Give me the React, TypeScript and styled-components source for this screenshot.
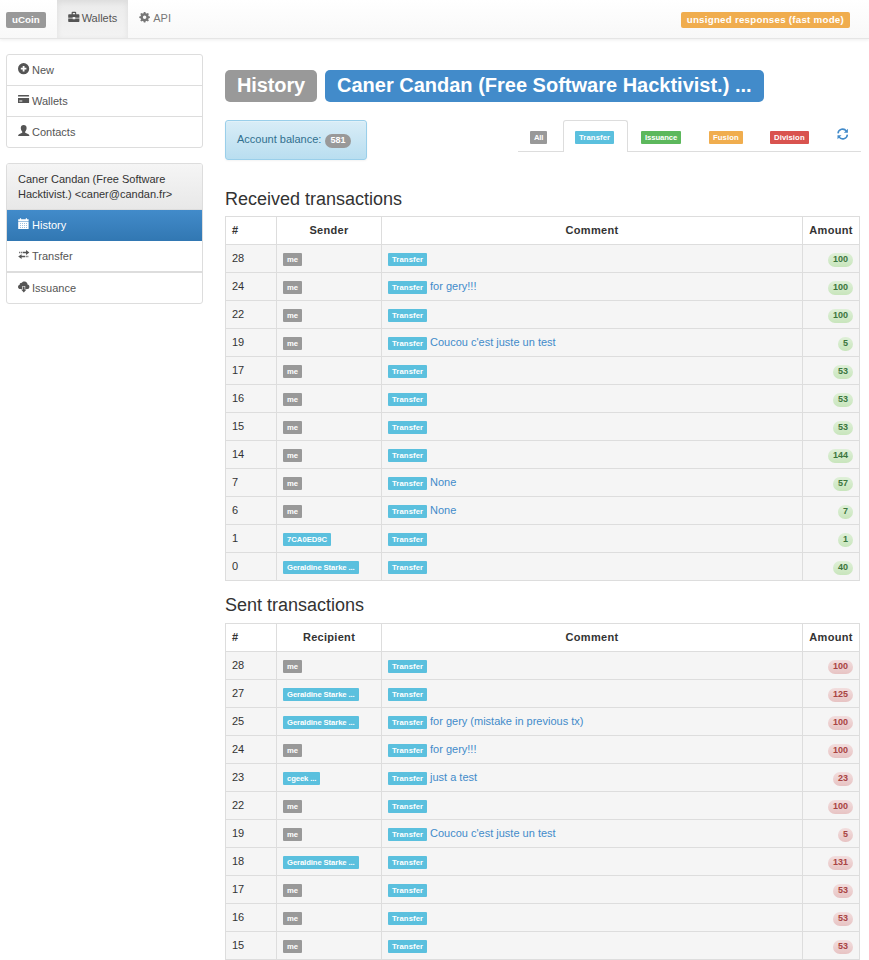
import React from 'react';
import styled, { createGlobalStyle, css } from 'styled-components';

const GlobalStyle = createGlobalStyle`
  *, *::before, *::after { box-sizing: border-box; }
  html, body { margin: 0; padding: 0; background: #fff; }
  body {
    font-family: "Liberation Sans", Arial, sans-serif;
    font-size: 11px;
    line-height: 15px;
    color: #333;
    height: 960px;
    overflow: hidden;
  }
  a { color: #428bca; text-decoration: none; }
`;

const tones = {
  gray: '#999999',
  primary: '#428bca',
  info: '#5bc0de',
  success: '#5cb85c',
  warning: '#f0ad4e',
  danger: '#d9534f',
};
type Tone = keyof typeof tones;

const Navbar = styled.nav`
  display: flex;
  align-items: flex-start;
  height: 39px;
  padding-left: 6px;
  padding-right: 19px;
  border-bottom: 1px solid #e5e5e5;
  background: linear-gradient(#ffffff, #f8f8f8);
  box-shadow: 0 1px 3px rgba(0, 0, 0, 0.075);
`;

const NavLabel = styled.span<{ $tone: Tone; $spacing?: number }>`
  height: 16px;
  margin-top: 12px;
  padding: 0 6px;
  border-radius: 2px;
  background: ${(p) => tones[p.$tone]};
  color: #fff;
  font-size: 9.75px;
  font-weight: bold;
  letter-spacing: ${(p) => p.$spacing ?? 0}px;
  line-height: 15px;
  white-space: nowrap;
`;

const NavLinks = styled.div`
  display: flex;
  flex: 1;
  margin-left: 11px;
`;

const NavLink = styled.a<{ $active?: boolean }>`
  display: flex;
  align-items: flex-start;
  gap: 2px;
  height: 38px;
  padding: 11px 11px 0;
  && { color: ${(p) => (p.$active ? '#555' : '#777')}; }
  ${(p) =>
    p.$active &&
    css`
      background: linear-gradient(#ebebeb, #f3f3f3);
      box-shadow: inset 0 2px 6px rgba(0, 0, 0, 0.075);
    `}
`;

const Page = styled.div`
  display: grid;
  grid-template-columns: 197px 635px;
  column-gap: 22px;
  padding-left: 6px;
`;

const Sidebar = styled.aside`
  display: flex;
  flex-direction: column;
  gap: 15px;
  padding-top: 15px;
`;

const ListGroup = styled.div`
  border: 1px solid #ddd;
  border-radius: 3px;
  overflow: hidden;
`;

const ListHeading = styled.div`
  height: 46px;
  padding: 8px 11px;
  border-bottom: 1px solid #ddd;
  background: linear-gradient(#f5f5f5, #e8e8e8);
  white-space: nowrap;
`;

const ListItem = styled.a<{ $active?: boolean; $thick?: boolean }>`
  display: flex;
  gap: 2px;
  height: ${(p) => (p.$thick ? 32 : 31)}px;
  padding: 8px 11px 0;
  border-bottom: ${(p) => (p.$thick ? 2 : 1)}px solid #ddd;
  && { color: #555; }
  &:last-child { height: 30px; border-bottom: 0; }
  ${(p) =>
    p.$active &&
    css`
      && { color: #fff; }
      background: linear-gradient(#428bca, #3278b3);
      border-bottom-color: #3278b3;
    `}
`;

const Glyph = styled.svg`
  display: block;
  flex: none;
  width: 12px;
  height: 12px;
  fill: currentColor;
`;

const Content = styled.main`
  padding-top: 31px;
`;

const TitleRow = styled.h1`
  display: flex;
  gap: 8px;
  margin: 0;
`;

const TitleLabel = styled.span<{ $tone: Tone; $width: number; $spacing?: number }>`
  width: ${(p) => p.$width}px;
  height: 32px;
  padding: 0 12px;
  border-radius: 5px;
  background: ${(p) => tones[p.$tone]};
  color: #fff;
  font-size: 20px;
  font-weight: bold;
  letter-spacing: ${(p) => p.$spacing ?? 0}px;
  line-height: 30px;
  white-space: nowrap;
`;

const Summary = styled.div`
  display: flex;
  justify-content: space-between;
  align-items: flex-start;
  height: 40px;
  margin: 18px -1px 0 0;
`;

const Balance = styled.div`
  display: flex;
  gap: 4px;
  width: 142px;
  height: 40px;
  padding: 11px;
  border: 1px solid #9acfea;
  border-radius: 3px;
  background: linear-gradient(#d9edf7, #b9def0);
  box-shadow: inset 0 1px 0 rgba(255, 255, 255, 0.25), 0 1px 2px rgba(0, 0, 0, 0.05);
  color: #31708f;
  white-space: nowrap;
`;

const Badge = styled.span<{ $kind?: 'in' | 'out' }>`
  display: inline-block;
  height: 14px;
  padding: 0 5px;
  border-radius: 7px;
  font-size: 9px;
  font-weight: bold;
  line-height: 13px;
  vertical-align: top;
  background: #999;
  color: #fff;
  ${(p) => p.$kind === 'in' && css`background: linear-gradient(#dff0d8, #c8e5bc); color: #3c763d;`}
  ${(p) => p.$kind === 'out' && css`background: linear-gradient(#f2dede, #e7c3c3); color: #a94442;`}
`;

const BalanceBadge = styled(Badge)`
  width: 26px;
  margin-top: 2px;
`;

const Tabs = styled.div`
  display: grid;
  grid-template-columns: 45px 66px 68px 61px 67px 36px;
  height: 32px;
  border-bottom: 1px solid #ddd;
`;

const Tab = styled.a<{ $active?: boolean }>`
  height: 32px;
  padding: 10px 0 0 11px;
  border: 1px solid transparent;
  border-bottom: 0;
  ${(p) =>
    p.$active &&
    css`
      margin-right: 1px;
      border-color: #ddd;
      border-radius: 3px 3px 0 0;
      background: #fff;
    `}
`;

const RefreshTab = styled(Tab)`
  padding-top: 7px;
`;

const Label = styled.span<{ $tone: Tone; $width?: number; $spacing?: number }>`
  display: inline-block;
  width: ${(p) => (p.$width ? `${p.$width}px` : 'auto')};
  height: 13px;
  padding: 0 4px;
  border-radius: 1px;
  background: ${(p) => tones[p.$tone]};
  color: #fff;
  font-size: 7.7px;
  font-weight: bold;
  letter-spacing: ${(p) => p.$spacing ?? 0}px;
  line-height: 13px;
  vertical-align: top;
  white-space: nowrap;
`;

const SectionTitle = styled.h3`
  height: 20px;
  margin: 0;
  font-size: 18px;
  font-weight: 400;
  line-height: 20px;
`;

const Section = styled.section<{ $first?: boolean }>`
  display: flex;
  flex-direction: column;
  gap: ${(p) => (p.$first ? 7 : 8)}px;
  padding-top: ${(p) => (p.$first ? 29 : 14)}px;
`;

const Table = styled.table`
  width: 635px;
  table-layout: fixed;
  border-collapse: separate;
  border-spacing: 0;
  border-top: 1px solid #ddd;
  border-left: 1px solid #ddd;
`;

const HeadCell = styled.th<{ $width?: number; $left?: boolean }>`
  width: ${(p) => (p.$width ? `${p.$width}px` : 'auto')};
  height: 28px;
  padding: 0 6px 1px;
  border: solid #ddd;
  border-width: 0 1px 1px 0;
  letter-spacing: 0.3px;
  text-align: ${(p) => (p.$left ? 'left' : 'center')};
`;

const Cell = styled.td<{ $labels?: boolean; $right?: boolean }>`
  height: 28px;
  padding: ${(p) => (p.$labels ? '8px 6px 0' : '6px 6px 0')};
  border: solid #ddd;
  border-width: 0 1px 1px 0;
  background: #f5f5f5;
  text-align: ${(p) => (p.$right ? 'right' : 'left')};
  vertical-align: top;
  line-height: 15px;
`;

const CommentLine = styled.div`
  display: flex;
  gap: 3px;
  height: 15px;
`;

const CommentLink = styled.a`
  margin-top: -2px;
`;

const Briefcase = () => (
  <Glyph viewBox="0 0 12 12">
    <path d="M3.600 3.200V1.800Q3.600.8 4.600.8h2.600q1 0 1 1v1.400h2.400q.8 0 .8.8v2.700H7.200V6H4.700v.7H.2V4q0-.8.8-.8zM4.800 3.200h2.300V2H4.800zM.2 7.500h4.500v.8h2.500v-.8h4.200v2.700q0 .7-.7.700H.9q-.7 0-.7-.7z" />
  </Glyph>
);

const Cog = () => (
  <Glyph viewBox="0 0 12 12">
    <circle cx="5.600" cy="6.300" r="2.900" fill="none" stroke="currentColor" strokeWidth="2.300" />
    {[0, 45, 90, 135, 180, 225, 270, 315].map((a) => (
      <path key={a} d="M4.400 3 4.800 1h1.600l.4 2z" transform={`rotate(${a} 5.600 6.300)`} />
    ))}
  </Glyph>
);

const PlusCircle = () => (
  <Glyph viewBox="0 0 12 12">
    <path fillRule="evenodd" d="M5.600.1a5.600 5.600 0 1 0 0 11.200 5.600 5.600 0 0 0 0-11.200zM4.700 2.900h1.800v1.900h1.900v1.800H6.500v1.900H4.700V6.600H2.800V4.800h1.900z" />
  </Glyph>
);

const CreditCard = () => (
  <Glyph viewBox="0 0 12 12">
    <path fillRule="evenodd" d="M0 1.500Q0 1 .5 1h10q.6 0 .6.500v.9H0zM0 4h11.100v4.500q0 .5-.6.500H.5Q0 9 0 8.500zM1.300 6.600v.9h3v-.9z" />
  </Glyph>
);

const Person = () => (
  <Glyph viewBox="0 0 12 12">
    <path d="M5.700 0C7.500 0 8.700 1.200 8.600 3c0 1.500-.6 2.600-1.300 3.400-.4.600-.2 1.300.5 1.700l2.700 1.100c.6.300.9.900.9 1.800H.1c0-.9.300-1.500.9-1.800l2.600-1.100c.7-.4.900-1.100.5-1.700C3.400 5.600 2.800 4.500 2.800 3 2.700 1.200 3.900 0 5.700 0z" />
  </Glyph>
);

const Calendar = () => (
  <Glyph viewBox="0 0 12 12">
    <path fillRule="evenodd" d="M.2 1.200h1.700V.2h1.200v1h4.700V.2H9v1h1.600v2.200H.2zM.2 4h10.400v7H.2zM2 5v.6h1V5zM4 5v.6h1V5zM6 5v.6h1V5zM8 5v.6h1V5zM2 7v.6h1V7zM4 7v.6h1V7zM6 7v.6h1V7zM8 7v.6h1V7zM2 9v.6h1V9zM4 9v.6h1V9zM6 9v.6h1V9zM8 9v.6h1V9z" />
  </Glyph>
);

const Exchange = () => (
  <Glyph viewBox="0 0 12 12">
    <path d="M8 .900 11.400 3.500 8 6V4.300H4.600V2.700H8zM2.800 2.700h1v1.600h-1zM1.200 2.700h.9v1.600h-.9zM3.600 5.200.2 7.500l3.400 2.400V8.300H7V6.700H3.600zM7.700 6.700h1v1.600h-1zM9.400 6.700h.9v1.600h-.9z" />
  </Glyph>
);

const CloudDownload = () => (
  <Glyph viewBox="0 0 12 12">
    <path d="M2.500 8C1 8 0 7.100 0 5.900 0 4.700.7 3.900 1.700 3.700 1.700 2.300 2.800 1.600 3.800 1.900 4.400.9 5.400.4 6.600.5c1.700.1 2.900 1.300 2.900 3.100 1.100.1 1.900.9 1.900 2.100C11.400 7.100 10.500 8 9.200 8H7.200V5H4.400v3z" />
    <path d="M5 5.600h1.600v3h1.900L5.800 11.500 3.100 8.600H5z" />
  </Glyph>
);

const Refresh = () => (
  <Glyph viewBox="0 0 12 12">
    <g fill="none" stroke="currentColor" strokeWidth="1.500">
      <path d="M1 5.400A4.600 4.600 0 0 1 9.400 3.200" />
      <path d="M10.400 6.600A4.600 4.600 0 0 1 2 8.800" />
    </g>
    <path d="M10.900.7v4.100H6.900zM.5 11.300V7.200h4z" />
  </Glyph>
);

const labelSpacing = (text: string) => (text.length > 12 ? -0.1 : text.length > 8 ? -0.12 : 0);

interface Tx {
  n: number;
  who: string;
  amount: number;
  comment?: string;
}

const received: Tx[] = [
  { n: 28, who: 'me', amount: 100 },
  { n: 24, who: 'me', amount: 100, comment: 'for gery!!!' },
  { n: 22, who: 'me', amount: 100 },
  { n: 19, who: 'me', amount: 5, comment: "Coucou c'est juste un test" },
  { n: 17, who: 'me', amount: 53 },
  { n: 16, who: 'me', amount: 53 },
  { n: 15, who: 'me', amount: 53 },
  { n: 14, who: 'me', amount: 144 },
  { n: 7, who: 'me', amount: 57, comment: 'None' },
  { n: 6, who: 'me', amount: 7, comment: 'None' },
  { n: 1, who: '7CA0ED9C', amount: 1 },
  { n: 0, who: 'Geraldine Starke ...', amount: 40 },
];

const sent: Tx[] = [
  { n: 28, who: 'me', amount: 100 },
  { n: 27, who: 'Geraldine Starke ...', amount: 125 },
  { n: 25, who: 'Geraldine Starke ...', amount: 100, comment: 'for gery (mistake in previous tx)' },
  { n: 24, who: 'me', amount: 100, comment: 'for gery!!!' },
  { n: 23, who: 'cgeek ...', amount: 23, comment: 'just a test' },
  { n: 22, who: 'me', amount: 100 },
  { n: 19, who: 'me', amount: 5, comment: "Coucou c'est juste un test" },
  { n: 18, who: 'Geraldine Starke ...', amount: 131 },
  { n: 17, who: 'me', amount: 53 },
  { n: 16, who: 'me', amount: 53 },
  { n: 15, who: 'me', amount: 53 },
];

function TxTable({ party, rows, kind }: { party: string; rows: Tx[]; kind: 'in' | 'out' }) {
  return (
    <Table>
      <thead>
        <tr>
          <HeadCell $width={51} $left>#</HeadCell>
          <HeadCell $width={105}>{party}</HeadCell>
          <HeadCell>Comment</HeadCell>
          <HeadCell $width={57}>Amount</HeadCell>
        </tr>
      </thead>
      <tbody>
        {rows.map((tx) => (
          <tr key={tx.n}>
            <Cell>{tx.n}</Cell>
            <Cell $labels>
              <Label $tone={tx.who === 'me' ? 'gray' : 'info'} $spacing={labelSpacing(tx.who)}>
                {tx.who}
              </Label>
            </Cell>
            <Cell $labels>
              <CommentLine>
                <Label $tone="info" $width={39} $spacing={0.1}>Transfer</Label>
                {tx.comment && <CommentLink>{tx.comment}</CommentLink>}
              </CommentLine>
            </Cell>
            <Cell $labels $right>
              <Badge $kind={kind}>{tx.amount}</Badge>
            </Cell>
          </tr>
        ))}
      </tbody>
    </Table>
  );
}

export default function App() {
  return (
    <>
      <GlobalStyle />
      <Navbar>
        <NavLabel $tone="gray">uCoin</NavLabel>
        <NavLinks>
          <NavLink $active><Briefcase />Wallets</NavLink>
          <NavLink><Cog />API</NavLink>
        </NavLinks>
        <NavLabel $tone="warning" $spacing={0.24}>unsigned responses (fast mode)</NavLabel>
      </Navbar>
      <Page>
        <Sidebar>
          <ListGroup>
            <ListItem><PlusCircle />New</ListItem>
            <ListItem><CreditCard />Wallets</ListItem>
            <ListItem><Person />Contacts</ListItem>
          </ListGroup>
          <ListGroup>
            <ListHeading>
              Caner Candan (Free Software<br />Hacktivist.) &lt;caner@candan.fr&gt;
            </ListHeading>
            <ListItem $active><Calendar />History</ListItem>
            <ListItem $thick><Exchange />Transfer</ListItem>
            <ListItem><CloudDownload />Issuance</ListItem>
          </ListGroup>
        </Sidebar>
        <Content>
          <TitleRow>
            <TitleLabel $tone="gray" $width={92} $spacing={-0.12}>History</TitleLabel>
            <TitleLabel $tone="primary" $width={439}>Caner Candan (Free Software Hacktivist.) ...</TitleLabel>
          </TitleRow>
          <Summary>
            <Balance>
              Account balance: <BalanceBadge>581</BalanceBadge>
            </Balance>
            <Tabs>
              <Tab><Label $tone="gray" $width={17} $spacing={-0.2}>All</Label></Tab>
              <Tab $active><Label $tone="info" $width={39} $spacing={0.1}>Transfer</Label></Tab>
              <Tab><Label $tone="success" $width={40} $spacing={-0.1}>Issuance</Label></Tab>
              <Tab><Label $tone="warning" $width={34} $spacing={0.1}>Fusion</Label></Tab>
              <Tab><Label $tone="danger" $width={39} $spacing={0.1}>Division</Label></Tab>
              <RefreshTab><Refresh /></RefreshTab>
            </Tabs>
          </Summary>
          <Section $first>
            <SectionTitle>Received transactions</SectionTitle>
            <TxTable party="Sender" rows={received} kind="in" />
          </Section>
          <Section>
            <SectionTitle>Sent transactions</SectionTitle>
            <TxTable party="Recipient" rows={sent} kind="out" />
          </Section>
        </Content>
      </Page>
    </>
  );
}
